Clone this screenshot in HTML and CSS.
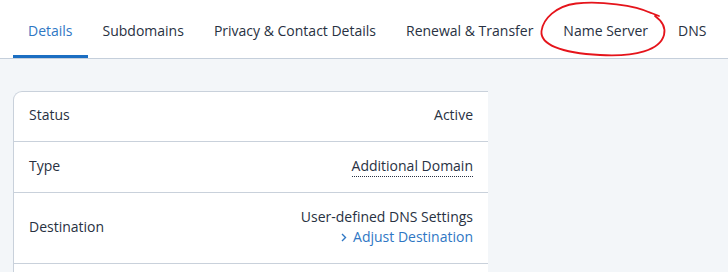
FILE: index.html
```html
<!DOCTYPE html>
<html lang="en">
<head>
<meta charset="utf-8">
<title>Domain Details</title>
<link rel="stylesheet" href="styles.css">
</head>
<body>
<nav class="tabs">
  <a class="tab active">Details</a>
  <a class="tab">Subdomains</a>
  <a class="tab">Privacy &amp; Contact Details</a>
  <a class="tab">Renewal &amp; Transfer</a>
  <a class="tab">Name Server</a>
  <a class="tab">DNS</a>
</nav>
<main class="content">
  <section class="card">
    <div class="row">
      <span class="label">Status</span>
      <span class="value">Active</span>
    </div>
    <div class="row">
      <span class="label">Type</span>
      <span class="value"><span class="dotted">Additional Domain</span></span>
    </div>
    <div class="row">
      <span class="label">Destination</span>
      <span class="value stack">
        <span>User-defined DNS Settings</span>
        <a class="link"><svg class="chev" width="6" height="9" viewBox="0 0 6 9"><path d="M1 1 L4.5 4.5 L1 8" fill="none" stroke="currentColor" stroke-width="1.4"/></svg>Adjust Destination</a>
      </span>
    </div>
    <div class="row">
      <span class="label">&nbsp;</span>
    </div>
  </section>
</main>
<svg class="annot" width="728" height="272" viewBox="0 0 728 272">
  <path d="M651 13 C 635 5, 600 1, 576 3.5 C 556 6, 543 19, 541.5 31 C 540 44, 560 53, 600 55 C 636 57, 660 50, 664 35 C 666 27, 662 21, 655 16 M650 12.5 L 659 16" fill="none" stroke="#e5141b" stroke-width="1.8" stroke-linecap="round" stroke-linejoin="round"/>
</svg>
</body>
</html>
```
FILE: styles.css
```css
* { box-sizing: border-box; }
html, body { margin: 0; padding: 0; }
body {
  font-family: "Open Sans", "Noto Sans", sans-serif;
  font-size: 14px;
  line-height: 20px;
  color: #283142;
  background: #f3f6f9;
  height: 272px;
  overflow: hidden;
  position: relative;
}
.tabs {
  display: flex;
  padding-left: 13px;
  height: 59px;
  background: #fff;
  border-bottom: 1px solid #c5cfdb;
}
.tab {
  display: flex;
  align-items: center;
  padding: 7px 15px 0;
  height: 58px;
  color: #283142;
  border-bottom: 3px solid transparent;
  white-space: nowrap;
}
.tab.active {
  color: #2f77c4;
  border-bottom-color: #1b6ec2;
}
.content {
  padding: 32px 0 0 13px;
}
.card {
  width: 475px;
  background: #fff;
  border-top: 1px solid #c9d1db;
  border-left: 1px solid #c9d1db;
  border-top-left-radius: 9px;
}
.row {
  display: flex;
  justify-content: space-between;
  align-items: center;
  padding: 14px 15px 16px 15px;
  border-bottom: 1px solid #c9d1db;
}
.row:first-child { padding-top: 13px; }
.value { text-align: right; }
.stack { display: flex; flex-direction: column; align-items: flex-end; }
.dotted {
  border-bottom: 1px dotted #283142;
  padding-bottom: 1px;
}
.link {
  color: #2f77c4;
  display: inline-flex;
  align-items: center;
  gap: 6px;
}
.chev { margin-top: 1px; }
.annot {
  position: absolute;
  left: 0;
  top: 0;
  pointer-events: none;
}
```
